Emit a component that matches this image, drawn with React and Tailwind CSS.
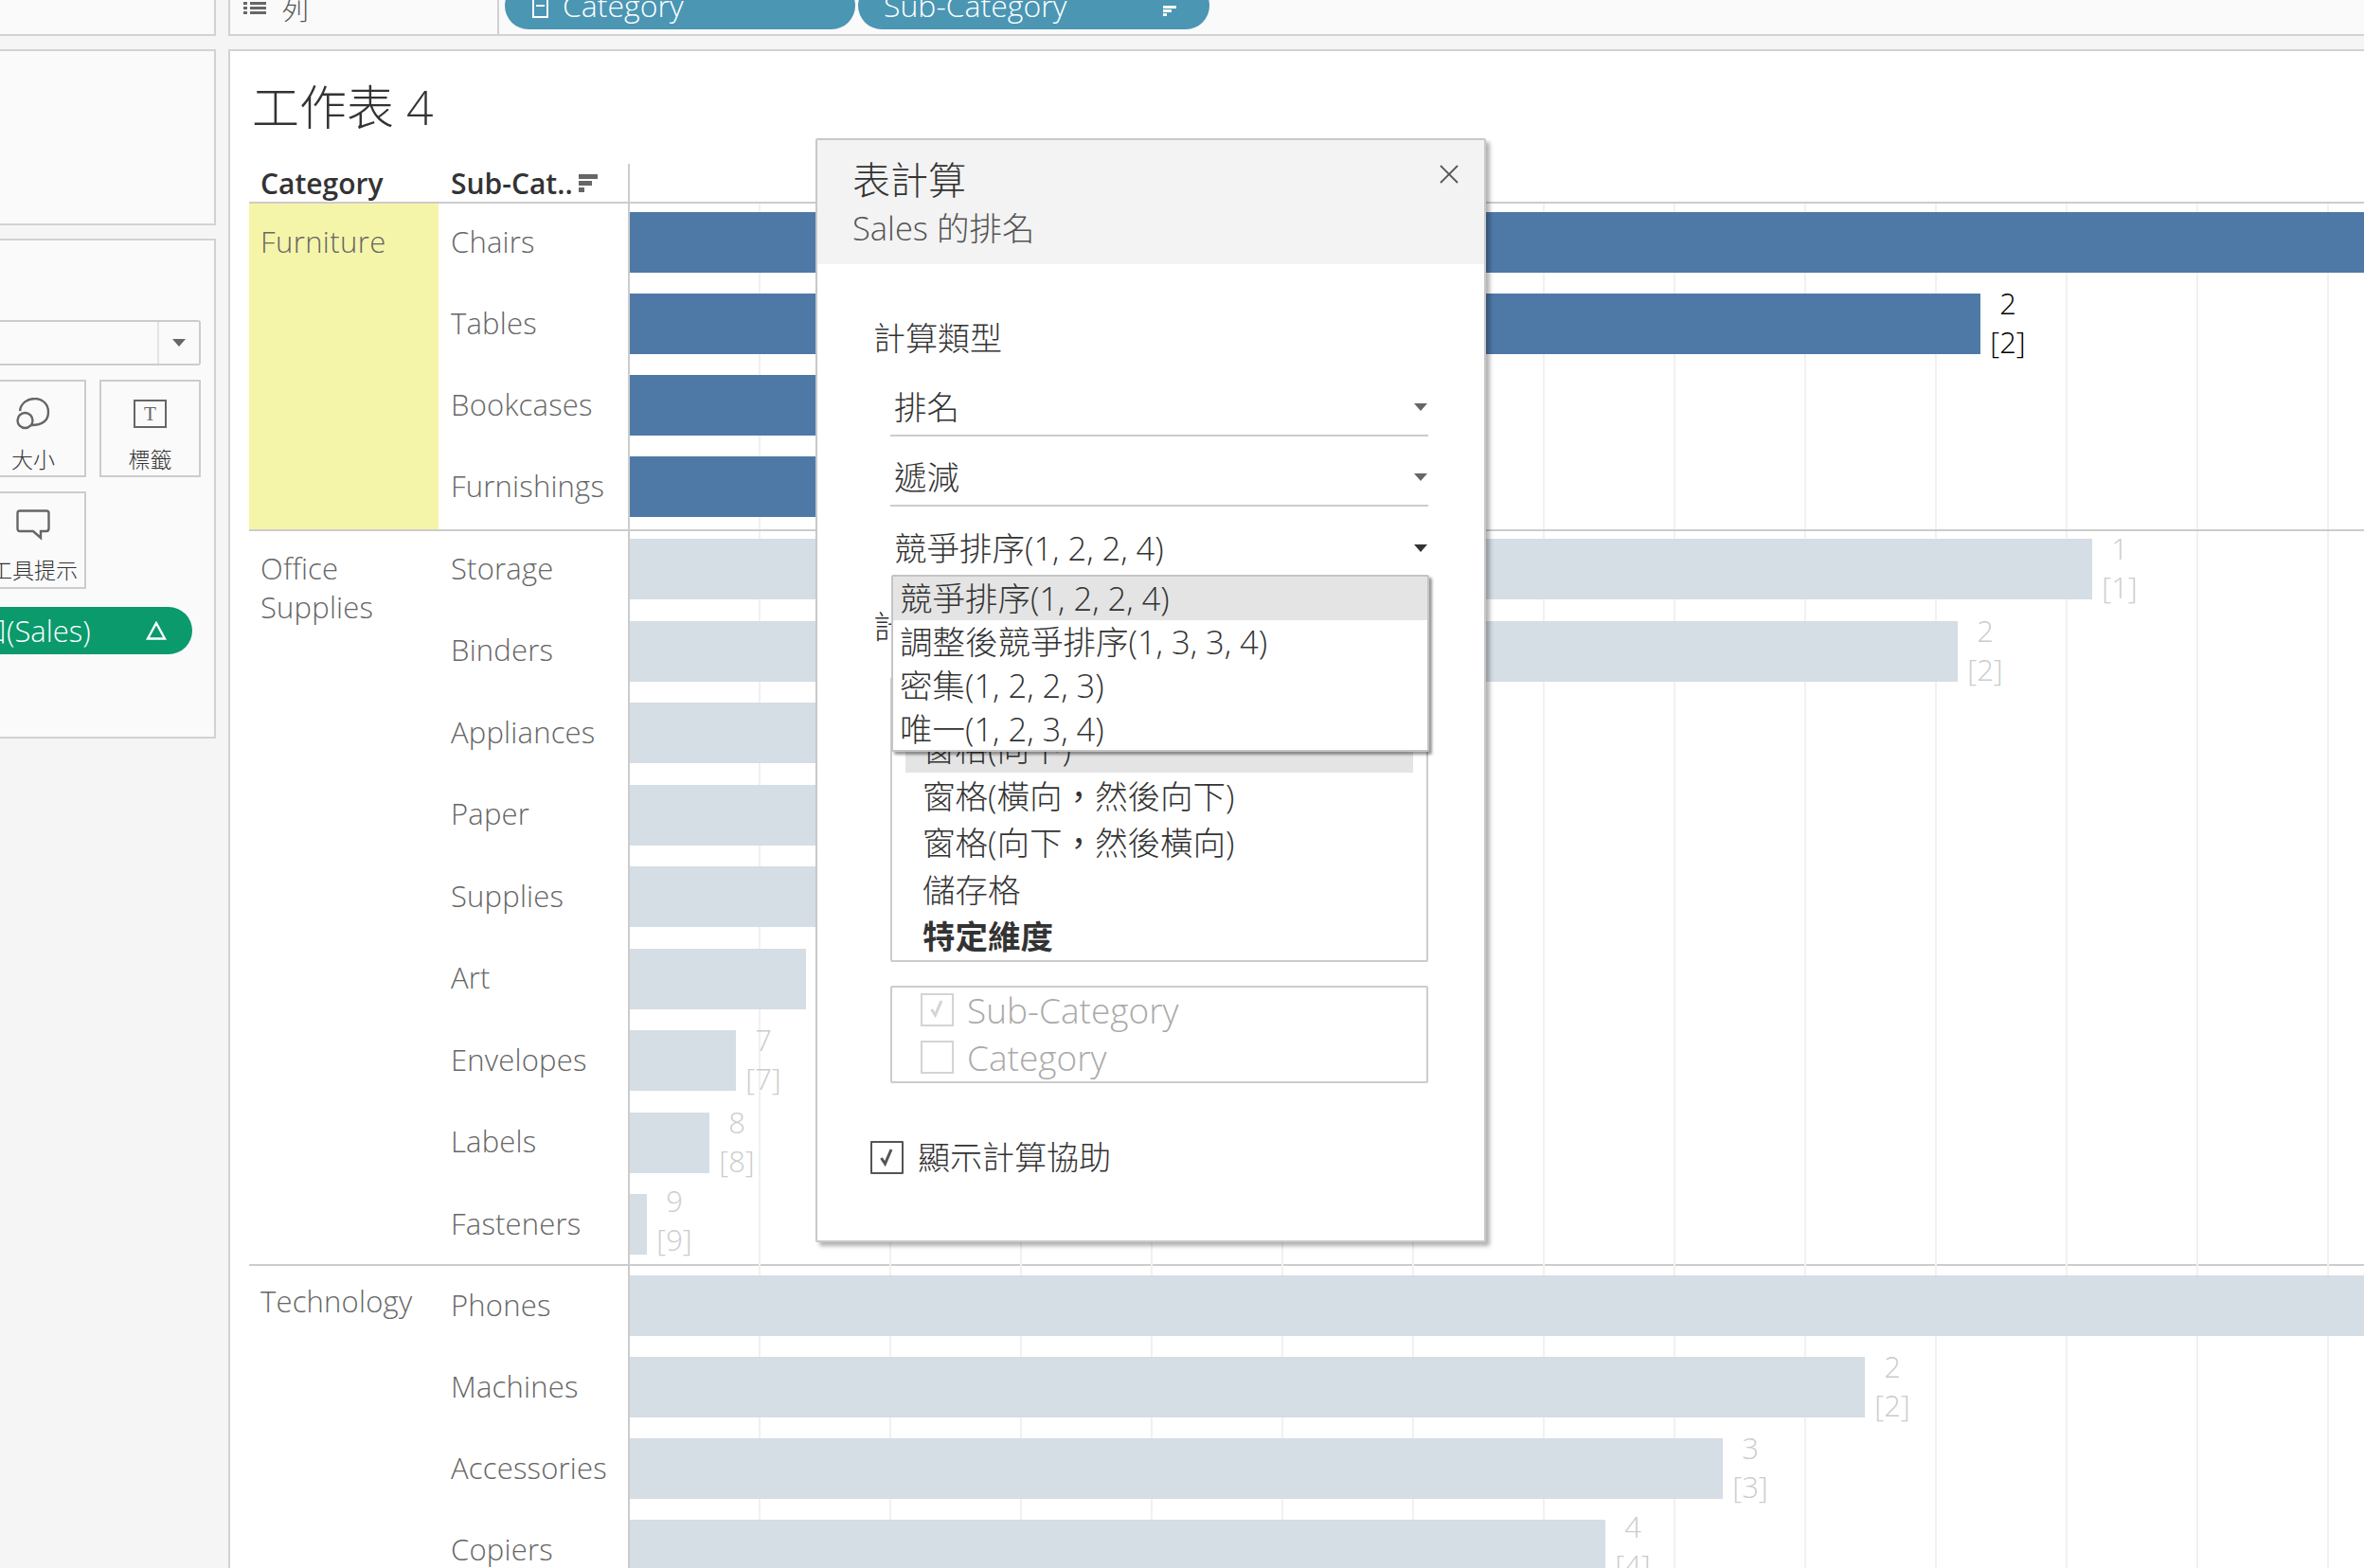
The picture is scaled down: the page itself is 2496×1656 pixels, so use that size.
const furniture = [
  { n: "Chairs", end: 2600, r: "1" },
  { n: "Tables", end: 2091, r: "2" },
  { n: "Bookcases", end: 1400, r: "3" },
  { n: "Furnishings", end: 1200, r: "4" },
];
const office = [
  { n: "Storage", end: 2209, r: "1" },
  { n: "Binders", end: 2067, r: "2" },
  { n: "Appliances", end: 1400, r: "3" },
  { n: "Paper", end: 1300, r: "4" },
  { n: "Supplies", end: 1100, r: "5" },
  { n: "Art", end: 851, r: "6" },
  { n: "Envelopes", end: 777, r: "7" },
  { n: "Labels", end: 749, r: "8" },
  { n: "Fasteners", end: 683, r: "9", up: true },
];
const tech = [
  { n: "Phones", end: 2600, r: "1" },
  { n: "Machines", end: 1969, r: "2" },
  { n: "Accessories", end: 1819, r: "3" },
  { n: "Copiers", end: 1695, r: "4", up: true },
];

function Row({ d, rowCls, padCls, active }) {
  return (
    <div className={`flex ${rowCls}`}>
      <div className={`w-[200px] shrink-0 ${padCls}`}>
        <div className="h-[62px] flex items-center pl-[13px] text-[31px] tracking-[0.2px] text-[#666] font-light">{d.n}</div>
      </div>
      <div className={`flex-1 min-w-0 flex items-start border-l-2 border-[#cccccc] bg-[repeating-linear-gradient(90deg,transparent_0,transparent_136px,#f1f1f1_136px,#f1f1f1_138px)] ${padCls}`}>
        <div className={`h-[64px] shrink-0 ${active ? "bg-[#4e79a7]" : "bg-[#d5dde5]"}`} style={{ width: d.end - 665 }} />
        <div className={`w-[58px] shrink-0 flex flex-col items-center text-[31px] leading-[41px] font-light ${d.up ? "-mt-[13px]" : "-mt-[10px]"} ${active ? "text-black" : "text-[#cccccc]"}`}>
          <span>{d.r}</span>
          <span>[{d.r}]</span>
        </div>
      </div>
    </div>
  );
}

function Caret({ cls = "border-t-[#666]" }) {
  return <span className={`w-0 h-0 border-x-[7px] border-x-transparent border-t-[8px] ${cls}`} />;
}

function SortIcon({ cls = "bg-[#666]" }) {
  return (
    <span className="flex flex-col gap-[2px] w-[20px]">
      <span className={`h-[5px] w-[20px] ${cls}`} />
      <span className={`h-[5px] w-[14px] ${cls}`} />
      <span className={`h-[5px] w-[6px] ${cls}`} />
    </span>
  );
}

function Check({ cls }) {
  return (
    <svg width="17" height="22" viewBox="0 0 17 22" fill="none" className={cls}>
      <path d="M2.5 12 L6.5 18 L13 3" stroke="currentColor" strokeWidth="3" />
    </svg>
  );
}

function Select({ label, line = true, dark }) {
  return (
    <div className={`h-[60px] ml-[17px] w-[568px] flex items-center justify-between pl-[4px] pr-[1px] ${line ? "border-b-2 border-[#cccccc]" : ""}`}>
      <span className="text-[#333]">{label}</span>
      <Caret cls={dark ? "border-t-[#333]" : "border-t-[#666]"} />
    </div>
  );
}

export default function App() {
  return (
    <div lang="zh-TW" className="w-[2496px] h-[1656px] overflow-hidden bg-[#f5f5f5] flex flex-col font-['Open_Sans','Noto_Sans_CJK_TC',sans-serif] relative">
      {/* top shelf */}
      <div className="h-[38px] flex gap-[13px] shrink-0">
        <div className="w-[228px] bg-[#fafafa] border-r-2 border-b-2 border-[#d2d2d2]" />
        <div className="flex-1 flex bg-[#fafafa] border-l-2 border-b-2 border-[#d2d2d2] overflow-hidden">
          <div className="w-[284px] border-r-2 border-[#d2d2d2] flex items-start pl-[14px] gap-[17px] text-[28px] text-[#555] leading-[20px] font-light">
            <svg width="24" height="13" viewBox="0 0 24 13" className="mt-[2px]" fill="#666">
              <rect x="0" y="0" width="4" height="3" /><rect x="7" y="0" width="17" height="3" />
              <rect x="0" y="5" width="4" height="3" /><rect x="7" y="5" width="17" height="3" />
              <rect x="0" y="10" width="4" height="3" /><rect x="7" y="10" width="17" height="3" />
            </svg>
            <span>列</span>
          </div>
          <div className="flex gap-[3px] ml-[6px] text-white text-[32px] font-light">
            <div className="w-[370px] h-[50px] -mt-[19px] rounded-[25px] bg-[#4a96b3] flex items-center pl-[29px] gap-[15px]">
              <svg width="17" height="26" viewBox="0 0 17 26" fill="none" stroke="white" strokeWidth="2">
                <rect x="1" y="1" width="15" height="24" /><path d="M4 13 H13" />
              </svg>
              <span>Category</span>
            </div>
            <div className="w-[371px] h-[50px] -mt-[19px] rounded-[25px] bg-[#4a96b3] flex items-center justify-between pl-[27px] pr-[35px]">
              <span>Sub-Category</span>
              <span className="flex flex-col gap-[1px] w-[14px] mt-[11px]">
                <span className="h-[3px] w-[14px] bg-white" />
                <span className="h-[3px] w-[9px] bg-white" />
                <span className="h-[3px] w-[4px] bg-white" />
              </span>
            </div>
          </div>
        </div>
      </div>

      <div className="flex gap-[13px] mt-[14px] flex-1 min-h-0">
        {/* left column */}
        <div className="w-[228px] shrink-0 flex flex-col gap-[14px]">
          <div className="h-[186px] bg-[#fafafa] border-y-2 border-r-2 border-[#d2d2d2]" />
          <div className="h-[528px] bg-[#fafafa] border-y-2 border-r-2 border-[#d2d2d2] flex flex-col overflow-hidden">
            <div className="mt-[84px] h-[48px] w-[212px] border-y-2 border-r-2 border-[#cccccc] rounded-r-[3px] flex justify-end shrink-0">
              <div className="w-[44px] border-l-2 border-[#e4e4e4] flex items-center justify-center"><Caret /></div>
            </div>
            <div className="flex gap-[14px] mt-[15px] -ml-[16px] w-[228px] text-[23px] text-[#333] font-light">
              <div className="w-[107px] h-[103px] shrink-0 border-2 border-[#cccccc] flex flex-col items-center pt-[17px]">
                <svg width="36" height="34" viewBox="0 0 36 34" fill="none" stroke="#666" strokeWidth="2.4" className="-ml-[5px]">
                  <path d="M4 14 C5 5 13 1 20 1 C28 1 34 7 34 15 C34 24 28 29 16 29" />
                  <circle cx="9.5" cy="24" r="8" />
                </svg>
                <span className="mt-[16px] -ml-[5px] leading-[30px]">大小</span>
              </div>
              <div className="w-[107px] h-[103px] shrink-0 border-2 border-[#cccccc] flex flex-col items-center pt-[19px]">
                <div className="w-[35px] h-[30px] border-[2.5px] border-[#666] flex items-center justify-center font-['Liberation_Serif',serif] text-[21px] text-[#666] leading-none">T</div>
                <span className="mt-[18px] leading-[30px]">標籤</span>
              </div>
            </div>
            <div className="mt-[15px] -ml-[16px] w-[107px] h-[103px] shrink-0 border-2 border-[#cccccc] flex flex-col items-center pt-[17px] text-[23px] text-[#333] font-light">
              <svg width="36" height="33" viewBox="0 0 36 33" fill="none" stroke="#666" strokeWidth="2.4" className="-ml-[5px]">
                <path d="M4 1.5 H32 Q34.5 1.5 34.5 4 V20 Q34.5 23 32 23 H26 V30 L18 23 H4 Q1.5 23 1.5 20 V4 Q1.5 1.5 4 1.5 Z" />
              </svg>
              <span className="mt-[16px] -ml-[3px] leading-[30px] whitespace-nowrap">工具提示</span>
            </div>
            <div className="mt-[19px] -ml-[70px] w-[273px] h-[50px] shrink-0 rounded-[25px] bg-[#0a9a6c] flex items-center justify-between pl-[15px] pr-[27px] text-white text-[31px] font-light">
              <span>總和(Sales)</span>
              <svg width="22" height="20" viewBox="0 0 22 20" fill="none" stroke="white" strokeWidth="2.4"><path d="M11 2 L20 18.5 H2 Z" /></svg>
            </div>
          </div>
        </div>

        {/* canvas */}
        <div className="flex-1 min-w-0 bg-white border-l-2 border-t-2 border-[#d2d2d2] pl-5">
          <div className="h-[119px] flex items-center pl-[3px] text-[50px] text-[#333] font-light">工作表 4</div>
          <div className="flex h-[42px] text-[30px] text-[#333] font-semibold">
            <div className="w-[200px] shrink-0 border-b-2 border-[#cccccc] pl-[12px] flex items-center">Category</div>
            <div className="w-[200px] shrink-0 border-b-2 border-[#cccccc] pl-[13px] flex items-center justify-between pr-[32px]">
              <span className="whitespace-nowrap">Sub-Cat..</span>
              <SortIcon />
            </div>
            <div className="flex-1 border-l-2 border-b-2 border-[#cccccc]" />
          </div>
          <div className="flex h-[344px]">
            <div className="w-[200px] shrink-0 bg-[#f5f5a9] pl-[12px] pt-[22px] text-[31px] tracking-[0.4px] leading-[36px] text-[#666] font-light">Furniture</div>
            <div className="flex-1 min-w-0 flex flex-col">
              {furniture.map((d) => <Row key={d.n} d={d} rowCls="h-[86px] shrink-0" padCls="pt-[9px]" active />)}
            </div>
          </div>
          <div className="flex h-[776px] border-t-2 border-[#cccccc]">
            <div className="w-[200px] shrink-0 pl-[12px] pt-[19px] text-[31px] tracking-[0.2px] leading-[41px] text-[#666] font-light">Office<br />Supplies</div>
            <div className="flex-1 min-w-0 flex flex-col">
              {office.map((d) => <Row key={d.n} d={d} rowCls="h-[86.5px] shrink-0" padCls="pt-[8px]" />)}
            </div>
          </div>
          <div className="flex h-[346px] border-t-2 border-[#cccccc]">
            <div className="w-[200px] shrink-0 pl-[12px] pt-[19px] text-[31px] tracking-[0.2px] leading-[36px] text-[#666] font-light">Technology</div>
            <div className="flex-1 min-w-0 flex flex-col">
              {tech.map((d) => <Row key={d.n} d={d} rowCls="h-[86px] shrink-0" padCls="pt-[10px]" />)}
            </div>
          </div>
        </div>
      </div>

      {/* dialog */}
      <div className="absolute left-[861px] top-[146px] w-[708px] h-[1166px] bg-white border-2 border-[#c8c8c8] shadow-[4px_4px_4px_rgba(0,0,0,0.3)] rounded-[2px] text-[34.5px] font-light">
        <div className="h-[131px] bg-[#f3f3f3] pl-[37px] pt-[17px]">
          <div className="text-[40px] leading-[50px] text-[#333]">表計算</div>
          <div className="text-[34.5px] leading-[46px] mt-[3px] text-[#555]">Sales 的排名</div>
        </div>
        <svg width="20" height="20" viewBox="0 0 20 20" className="absolute top-[26px] right-[27px]" stroke="#555" strokeWidth="1.8" fill="none">
          <path d="M1 1 L19 19 M19 1 L1 19" />
        </svg>
        <div className="pl-[59px]">
          <div className="h-[44px] mt-[56px] flex items-center text-[#333] text-[34px]">計算類型</div>
          <div className="mt-[22px] ml-[1px]"><Select label="排名" /></div>
          <div className="mt-[14px] ml-[1px]"><Select label="遞減" /></div>
          <div className="mt-[14px] ml-[1px]"><Select label="競爭排序(1, 2, 2, 4)" line={false} dark /></div>
          <div className="h-[44px] mt-[31px] flex items-center text-[#333] text-[34px]">計算依據</div>
          <div className="ml-[18px] w-[568px] h-[301px] mt-[31px] border-2 border-[#cccccc] rounded-[2px] text-[#333] overflow-hidden">
            <div className="h-[49.5px] px-[18px] mx-[14px] flex items-center">窗格(橫向)</div>
            <div className="h-[49.5px] px-[18px] mx-[14px] flex items-center bg-[#e4e4e4]">窗格(向下)</div>
            <div className="h-[49.5px] px-[18px] mx-[14px] flex items-center">窗格(橫向<span className="font-normal">，</span>然後向下)</div>
            <div className="h-[49.5px] px-[18px] mx-[14px] flex items-center">窗格(向下<span className="font-normal">，</span>然後橫向)</div>
            <div className="h-[49.5px] px-[18px] mx-[14px] flex items-center">儲存格</div>
            <div className="h-[49.5px] px-[18px] mx-[14px] flex items-center font-bold">特定維度</div>
          </div>
          <div className="ml-[18px] w-[568px] h-[103px] mt-[25px] border-2 border-[#cccccc] rounded-[2px] pt-[6px] pl-[30px] flex flex-col gap-[15px] text-[#aaaaaa] text-[37px]">
            <div className="h-[35px] flex items-center gap-[14px]">
              <span className="w-[35px] h-[35px] border-2 border-[#d4d4d4] flex items-start justify-center pt-[3px] text-[#d4d4d4]"><Check /></span>
              <span>Sub-Category</span>
            </div>
            <div className="h-[35px] flex items-center gap-[14px]">
              <span className="w-[35px] h-[35px] border-2 border-[#d4d4d4]" />
              <span>Category</span>
            </div>
          </div>
          <div className="mt-[61px] -ml-[3px] flex items-center gap-[15px] h-[35px] text-[#333] text-[34px]">
            <span className="w-[35px] h-[35px] border-2 border-[#555] flex items-start justify-center pt-[4px] text-[#555] rounded-[1px]"><Check /></span>
            <span>顯示計算協助</span>
          </div>
        </div>

        {/* open dropdown */}
        <div className="absolute left-[78px] top-[459px] w-[568px] h-[187px] bg-white border-2 border-[#c4c4c4] rounded-[2px] shadow-[3px_3px_3px_rgba(0,0,0,0.4)] text-[#333]">
          <div className="h-[46px] pl-[7px] flex items-center bg-[#e4e4e4]">競爭排序(1, 2, 2, 4)</div>
          <div className="h-[46px] pl-[7px] flex items-center">調整後競爭排序(1, 3, 3, 4)</div>
          <div className="h-[46px] pl-[7px] flex items-center">密集(1, 2, 2, 3)</div>
          <div className="h-[46px] pl-[7px] flex items-center">唯一(1, 2, 3, 4)</div>
        </div>
      </div>
    </div>
  );
}
